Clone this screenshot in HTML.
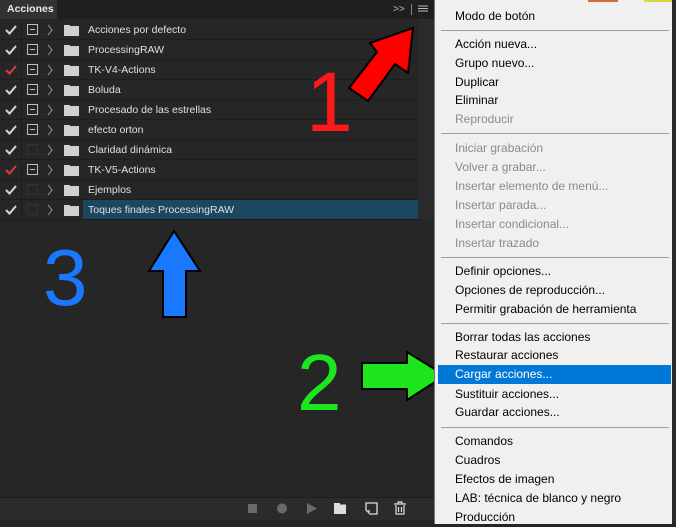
<!DOCTYPE html>
<html><head><meta charset="utf-8"><style>
*{margin:0;padding:0;box-sizing:border-box}
body{width:676px;height:524px;overflow:hidden;background:#262626;position:relative;font-family:"Liberation Sans",sans-serif}
.hdr{position:absolute;left:0;top:0;width:434px;height:19px;background:#1f1f1f}
.tab{position:absolute;left:0;top:0;width:57px;height:19px;background:#323232;color:#e8e8e8;font-size:10.5px;font-weight:bold;line-height:19px;padding-left:7px}
.row{position:absolute;left:0;width:418px;height:20px;border-bottom:1px solid #1e1e1e}
.row .c1{position:absolute;left:0;top:0;width:22px;height:19px;border-right:1px solid #1e1e1e}
.row .t{position:absolute;left:88px;top:1px;line-height:19px;font-size:10.5px;color:#e0e0e0}
.row.sel .hl{position:absolute;left:83px;top:0;width:335px;height:19px;background:#1c4760}
.box{position:absolute;left:27px;top:4px;width:11px;height:11px;border:1px solid #bdbdbd}
.box:after{content:"";position:absolute;left:2px;top:4px;width:5px;height:1px;background:#bdbdbd}
.box.e{border-color:#333}.box.e:after{display:none}
.menu{position:absolute;left:434px;top:0;width:238px;height:524px;background:#f0f0f0;border-left:1px solid #777}
.mi{position:absolute;left:20px;font-size:12px;color:#000;line-height:19px;white-space:nowrap;margin-top:1px}
.mi.d{color:#8a8a8a}
.sep{position:absolute;left:6px;width:228px;height:1px;background:#a0a0a0;margin-top:1px}
.big{position:absolute;font-family:"Liberation Sans",sans-serif;line-height:1}
</style></head><body>
<div class="hdr"></div><div class="tab">Acciones</div>
<div style="position:absolute;left:393px;top:4px;color:#bbb;font-size:10px">&gt;&gt;</div>
<div style="position:absolute;left:411px;top:4px;width:1px;height:11px;background:#888"></div>
<svg style="position:absolute;left:418px;top:5px" width="10" height="8"><path d="M0 1H10M0 3.5H10M0 6H10" stroke="#bbb" stroke-width="1"/></svg>
<div style="position:absolute;left:418px;top:19px;width:16px;height:200px;background:#2a2a2a"></div>

<div id="rows"></div>
<script>
var n=[["Acciones por defecto",0,1],["ProcessingRAW",0,1],["TK-V4-Actions",1,1],["Boluda",0,1],["Procesado de las estrellas",0,1],["efecto orton",0,1],["Claridad dinámica",0,0],["TK-V5-Actions",1,1],["Ejemplos",0,0],["Toques finales ProcessingRAW",0,0]];
var h="";
n.forEach(function(r,i){
h+='<div class="row'+(i==9?' sel':'')+'" style="top:'+(20+i*20)+'px"><div class="c1"></div>'+(i==9?'<div class="hl"></div>':'')+
'<svg style="position:absolute;left:5px;top:5px" width="12" height="10"><path d="M1 5L4.5 8.5L11 1" fill="none" stroke="'+(r[1]?'#e03a3a':'#d8d8d8')+'" stroke-width="2"/></svg>'+
'<div class="box'+(r[2]?'':' e')+'"></div>'+
'<svg style="position:absolute;left:47px;top:4px" width="6" height="12"><path d="M1 1L5 6L1 11" fill="none" stroke="#999" stroke-width="1"/></svg>'+
'<svg style="position:absolute;left:64px;top:4px" width="15" height="12"><path d="M0 1H6V2H15V12H0Z" fill="#d0d0d0"/></svg>'+
'<div class="t">'+r[0]+'</div></div>';});
document.getElementById("rows").innerHTML=h;
</script>

<div style="position:absolute;left:0;top:497px;width:434px;height:23px;background:#2b2b2b;border-top:1px solid #1e1e1e"></div>
<svg style="position:absolute;left:240px;top:498px" width="180" height="22">
<rect x="8" y="6" width="9" height="9" fill="#6a6a6a"/>
<circle cx="42" cy="10.5" r="5" fill="#6a6a6a"/>
<path d="M67 5L77 10.5L67 16Z" fill="#6a6a6a"/>
<path d="M94 5H100V6.5H106V16H94Z" fill="#ddd"/>
<path d="M126 5H137V16H130L126 12Z M129 12V14" fill="none" stroke="#ddd" stroke-width="1.3"/>
<path d="M154 6H166M158 6V4H162V6M156 7V16H164V7M158.5 9V14M161.5 9V14" fill="none" stroke="#ddd" stroke-width="1.2"/>
</svg>

<div class="big" style="left:306px;top:60px;font-size:84px;color:#ff1a1a">1</div>
<div class="big" style="left:297px;top:343px;font-size:80px;color:#1ee61e">2</div>
<div class="big" style="left:43px;top:238px;font-size:80px;color:#1a78ff">3</div>
<svg style="position:absolute;left:0;top:0" width="676" height="524">
<path d="M413 28L408 73L395 64L368 101L349 88L377 52L370 43Z" fill="#ff0000" stroke="#000" stroke-width="2"/>
<path d="M362 363H407V352L445 375.5L407 400V389H362Z" fill="#1ee61e" stroke="#000" stroke-width="2"/>
<path d="M174 231L200 271H186V317H163V271H149Z" fill="#1a78ff" stroke="#000" stroke-width="2"/>
</svg>

<div class="menu">
<div class="mi" style="top:6px">Modo de botón</div>
<div class="sep" style="top:29px"></div>
<div class="mi" style="top:34px">Acción nueva...</div>
<div class="mi" style="top:53px">Grupo nuevo...</div>
<div class="mi" style="top:72px">Duplicar</div>
<div class="mi" style="top:90px">Eliminar</div>
<div class="mi d" style="top:109px">Reproducir</div>
<div class="sep" style="top:132px"></div>
<div class="mi d" style="top:138px">Iniciar grabación</div>
<div class="mi d" style="top:157px">Volver a grabar...</div>
<div class="mi d" style="top:176px">Insertar elemento de menú...</div>
<div class="mi d" style="top:195px">Insertar parada...</div>
<div class="mi d" style="top:214px">Insertar condicional...</div>
<div class="mi d" style="top:233px">Insertar trazado</div>
<div class="sep" style="top:256px"></div>
<div class="mi" style="top:261px">Definir opciones...</div>
<div class="mi" style="top:280px">Opciones de reproducción...</div>
<div class="mi" style="top:299px">Permitir grabación de herramienta</div>
<div class="sep" style="top:322px"></div>
<div class="mi" style="top:327px">Borrar todas las acciones</div>
<div class="mi" style="top:345px">Restaurar acciones</div>
<div style="position:absolute;left:3px;top:365px;width:233px;height:19px;background:#0078d7"></div>
<div class="mi" style="top:364px;color:#fff">Cargar acciones...</div>
<div class="mi" style="top:384px">Sustituir acciones...</div>
<div class="mi" style="top:402px">Guardar acciones...</div>
<div class="sep" style="top:426px"></div>
<div class="mi" style="top:431px">Comandos</div>
<div class="mi" style="top:450px">Cuadros</div>
<div class="mi" style="top:469px">Efectos de imagen</div>
<div class="mi" style="top:488px">LAB: técnica de blanco y negro</div>
<div class="mi" style="top:507px">Producción</div>
</div>
<div style="position:absolute;left:672px;top:0;width:4px;height:524px;background:#2a2a2a"></div>
<div style="position:absolute;left:588px;top:0;width:30px;height:2px;background:#d06a40"></div>
<div style="position:absolute;left:644px;top:0;width:28px;height:2px;background:#d8d840"></div>
</body></html>
